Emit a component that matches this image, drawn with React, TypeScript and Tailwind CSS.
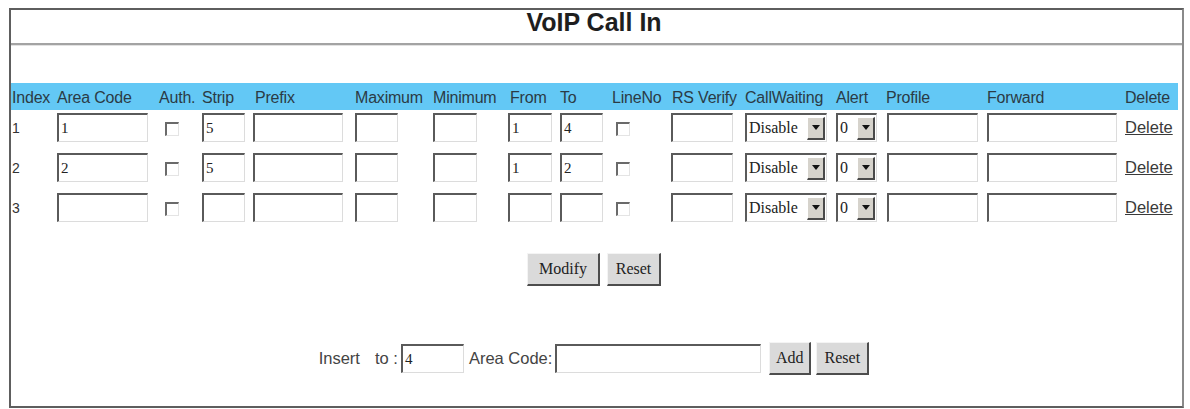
import React from "react";

const sans = "font-['Liberation_Sans',Arial,sans-serif]";
const serif = "font-['Liberation_Serif','Times_New_Roman',serif]";

const sunken =
  "h-[29px] bg-white border-t-2 border-l-2 border-t-[#5a5a5a] border-l-[#5a5a5a] border-b border-r border-b-[#dcdcdc] border-r-[#dcdcdc]";

function Field({ w, value = "" }: { w: string; value?: string }) {
  return (
    <div className={`${sunken} ${w} shrink-0 ${serif} text-[15px] text-[#222] leading-[26px] pl-[2px] overflow-hidden`}>
      {value}
    </div>
  );
}

function Check({ ml }: { ml: string }) {
  return (
    <div
      className={`${ml} mt-[9px] w-[14px] h-[14px] bg-white border-t-2 border-l-2 border-t-[#6a6a6a] border-l-[#6a6a6a] border-b border-r border-b-[#e4e4e4] border-r-[#e4e4e4]`}
    />
  );
}

function Select({ w, value }: { w: string; value: string }) {
  return (
    <div className={`${sunken} ${w} flex items-center`}>
      <span className={`flex-1 pl-[2px] ${serif} text-[16px] text-[#222] leading-none`}>{value}</span>
      <span className="w-[18px] h-[23px] mr-[1px] bg-[#d6d3cc] border-t border-l border-t-white border-l-white border-b-2 border-r-2 border-b-[#4a4a4a] border-r-[#4a4a4a] flex items-center justify-center">
        <svg width="8" height="5" viewBox="0 0 8 5">
          <path d="M0 0 H8 L4 5 Z" fill="#111" />
        </svg>
      </span>
    </div>
  );
}

function Btn({ w, label }: { w: string; label: string }) {
  return (
    <div
      className={`${w} shrink-0 h-[33px] bg-[#dadada] border-t border-l border-t-[#f4f4f4] border-l-[#f4f4f4] border-b-2 border-r-2 border-b-[#4d4d4d] border-r-[#4d4d4d] flex items-center justify-center ${serif} text-[16px] text-[#222]`}
    >
      {label}
    </div>
  );
}

const cols =
  "grid grid-cols-[46px_101px_44px_51px_102px_78px_75px_52px_52px_59px_74px_91px_50px_101px_138px_53px]";

const rows = [
  { idx: "1", area: "1", strip: "5", from: "1", to: "4" },
  { idx: "2", area: "2", strip: "5", from: "1", to: "2" },
  { idx: "3", area: "", strip: "", from: "", to: "" },
];

export default function App() {
  return (
    <div className="w-[1190px] h-[409px] bg-white pt-[8px] pl-[9px] overflow-hidden">
      <div className="w-[1175px] h-[400px] border-2 border-[#5e5e5e] border-r-[#8a8a8a] flex flex-col">
        <div className={`h-[25px] leading-[25px] text-center ${sans} font-bold text-[25px] text-[#1e1e1e] pr-[5px]`}>
          VoIP Call In
        </div>
        <div className="mt-[8px] border-t-2 border-t-[#a3a3a3] border-b border-b-[#e2e2e2]" />
        <div className="mt-[37px] mr-[4px]">
          <div className={`${cols} h-[27px] bg-[#63c8f5] items-center pt-[2px] ${sans} text-[16px] text-[#2b3b45] tracking-[-0.2px] whitespace-nowrap`}>
            <span className="pl-[1px]">Index</span>
            <span>Area Code</span>
            <span className="pl-[1px]">Auth.</span>
            <span>Strip</span>
            <span className="pl-[2px]">Prefix</span>
            <span>Maximum</span>
            <span>Minimum</span>
            <span className="pl-[2px]">From</span>
            <span>To</span>
            <span>LineNo</span>
            <span className="pl-[1px]">RS Verify</span>
            <span>CallWaiting</span>
            <span>Alert</span>
            <span>Profile</span>
            <span>Forward</span>
            <span>Delete</span>
          </div>
          {rows.map((r) => (
            <div key={r.idx} className={`${cols} h-[40px] items-start pt-[3px]`}>
              <span className={`pl-[1px] ${sans} text-[14px] leading-[30px] text-[#333]`}>{r.idx}</span>
              <Field w="w-[91px]" value={r.area} />
              <Check ml="ml-[7px]" />
              <Field w="w-[43px]" value={r.strip} />
              <Field w="w-[90px]" />
              <Field w="w-[43px]" />
              <Field w="w-[44px]" />
              <Field w="w-[44px]" value={r.from} />
              <Field w="w-[43px]" value={r.to} />
              <Check ml="ml-[4px]" />
              <Field w="w-[62px]" />
              <Select w="w-[82px]" value="Disable" />
              <Select w="w-[41px]" value="0" />
              <div className="pl-[1px]">
                <Field w="w-[91px]" />
              </div>
              <Field w="w-[130px]" />
              <a className={`${sans} text-[16.5px] leading-[29px] text-[#3a3a3a] underline`} href="#">
                Delete
              </a>
            </div>
          ))}
        </div>
        <div className="mt-[23px] flex justify-center gap-[7px] pr-[5px]">
          <Btn w="w-[73px]" label="Modify" />
          <Btn w="w-[54px]" label="Reset" />
        </div>
        <div className={`mt-[56px] flex items-center justify-center pr-[5px] ${sans} text-[16.5px] text-[#444] whitespace-nowrap`}>
          <span>Insert</span>
          <span className="ml-[15px] mr-[3px]">to :</span>
          <Field w="w-[63px]" value="4" />
          <span className="ml-[5px] mr-[3px]">Area Code:</span>
          <Field w="w-[206px]" />
          <div className="ml-[8px] flex gap-[5px]">
            <Btn w="w-[42px]" label="Add" />
            <Btn w="w-[53px]" label="Reset" />
          </div>
        </div>
      </div>
    </div>
  );
}
